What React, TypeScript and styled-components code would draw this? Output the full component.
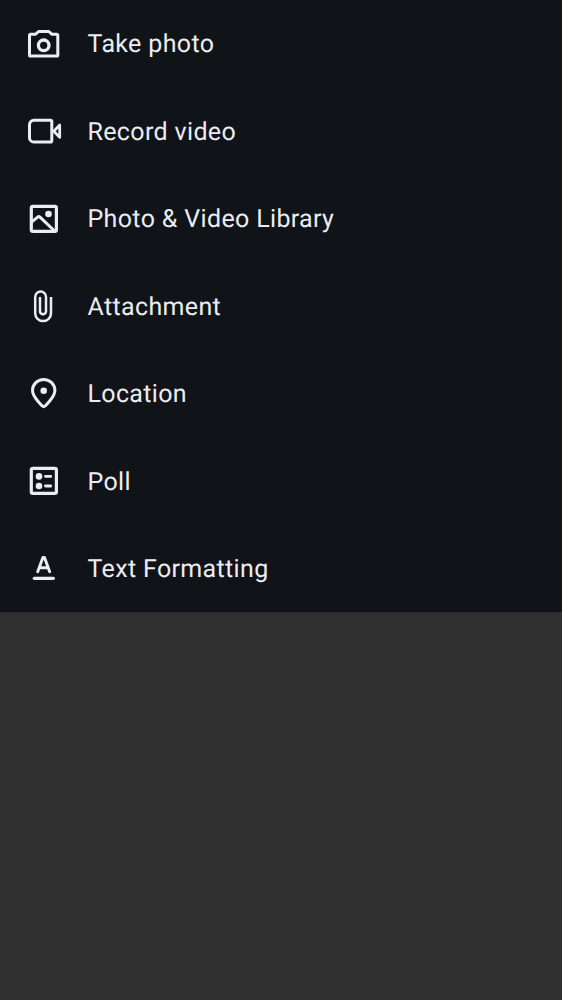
import React from 'react';
import styled, { createGlobalStyle } from 'styled-components';

const GlobalStyle = createGlobalStyle`
  body { margin: 0; background: #303030; font-family: Roboto, sans-serif; }
`;
const Menu = styled.ul`
  margin: 0;
  padding: 0;
  height: 612px;
  list-style: none;
  background: #101318;
  border-bottom: 1px solid #2a2b2b;
`;
const Item = styled.li`
  display: flex;
  align-items: center;
  gap: 19.5px;
  height: 87.5px;
  padding-left: 20px;
  color: #ecedf2;
`;
const Icon = styled.svg`
  width: 48px;
  height: 48px;
  flex: none;
  fill: none;
  stroke: currentColor;
  stroke-width: 3.2;
  stroke-linejoin: round;
  stroke-linecap: round;
`;
const Dot = styled.circle`
  fill: currentColor;
  stroke: none;
`;
const Label = styled.span`
  padding-top: 2.7px;
  font-size: 25px;
  line-height: 36px;
  letter-spacing: 0.35px;
  white-space: nowrap;
  text-rendering: geometricPrecision;
`;

const Frame = () => <rect x="11.300" y="11.300" width="25.100" height="25.100" rx="1.700" strokeWidth="3.200" />;

const entries: { label: string; icon: React.ReactNode }[] = [
  {
    label: 'Take photo',
    icon: (
      <>
        <path d="M10.600 14.200H15.600L18.600 11.500H28.800L31.800 14.200H36.700a1.100 1.100 0 0 1 1.100 1.100V35a1.100 1.100 0 0 1-1.100 1.100H10.600A1.100 1.100 0 0 1 9.500 35V15.300a1.100 1.100 0 0 1 1.100-1.100z" strokeWidth="3" />
        <circle cx="23.700" cy="25.300" r="5.300" strokeWidth="3.300" />
      </>
    ),
  },
  {
    label: 'Record video',
    icon: (
      <>
        <path d="M13.900 13.200H30.500a1.300 1.300 0 0 1 1.300 1.300V33.800a1.300 1.300 0 0 1-1.300 1.300H13.900a4.400 4.400 0 0 1-4.400-4.400V17.600a4.400 4.400 0 0 1 4.400-4.400z" strokeWidth="3" />
        <path d="M33.800 24.200L39.700 18V30.400z" strokeWidth="2.800" />
      </>
    ),
  },
  {
    label: 'Photo & Video Library',
    icon: (
      <>
        <Frame />
        <path d="M11.500 27.200L17.600 22.200a1.800 1.800 0 0 1 2.400 0L34.600 36" strokeWidth="3" />
        <Dot cx="28.500" cy="19" r="3.300" />
      </>
    ),
  },
  {
    label: 'Attachment',
    icon: <path d="M31 15V31.200a7.900 7.900 0 0 1-15.800 0V15a5.400 5.400 0 0 1 10.800 0V29.300a3 3 0 0 1-6 0V15" strokeWidth="2.500" strokeLinecap="butt" />,
  },
  {
    label: 'Location',
    icon: (
      <>
        <path d="M23.700 36.700C22.700 36.700 12.500 27 12.500 20.600a11.200 11.200 0 0 1 22.400 0C34.900 27 24.700 36.700 23.700 36.700z" strokeWidth="3" />
        <Dot cx="23.700" cy="20.700" r="3.300" />
      </>
    ),
  },
  {
    label: 'Poll',
    icon: (
      <>
        <Frame />
        <Dot cx="19" cy="19.400" r="3.300" />
        <Dot cx="19" cy="29" r="3.300" />
        <path d="M25.500 19.400H30.700M25.500 29H30.700" strokeWidth="2.900" />
      </>
    ),
  },
  {
    label: 'Text Formatting',
    icon: (
      <>
        <path d="M17.700 26.700L22.900 12.500H24.500L29.700 26.700M19.500 22.700H27.900" strokeWidth="2.900" />
        <path d="M14.300 33.300H33.400" />
      </>
    ),
  },
];

export default function App() {
  return (
    <>
      <GlobalStyle />
      <Menu>
        {entries.map((e) => (
          <Item key={e.label}>
            <Icon viewBox="0 0 48 48">{e.icon}</Icon>
            <Label>{e.label}</Label>
          </Item>
        ))}
      </Menu>
    </>
  );
}
